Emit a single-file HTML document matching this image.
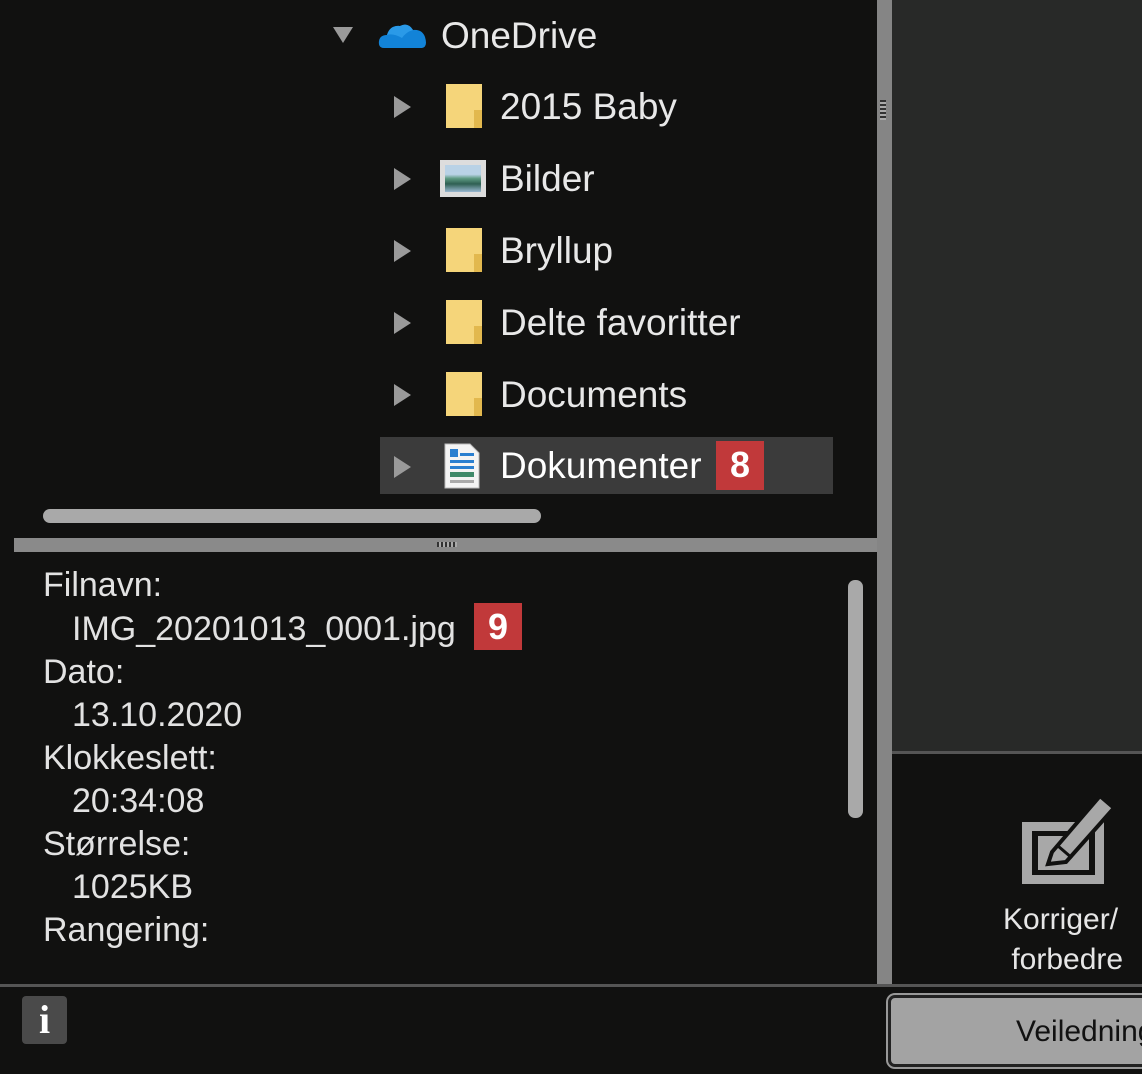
<!DOCTYPE html>
<html><head><meta charset="utf-8"><style>
*{margin:0;padding:0;box-sizing:border-box}
body{width:1142px;height:1074px;background:#111110;position:relative;overflow:hidden;font-family:"Liberation Sans",Arimo,Arial,Helvetica,sans-serif;color:#e4e4e4}
.a{position:absolute}
.t{position:absolute;font-size:37px;line-height:44px;white-space:nowrap;color:#e8e8e8}
.tri{position:absolute;width:0;height:0;border-top:11px solid transparent;border-bottom:11px solid transparent;border-left:17px solid #9a9a9a}
.fold{position:absolute;width:36px;height:44px;background:#f5d57a}
.fold:after{content:"";position:absolute;right:0;bottom:0;width:8px;height:18px;background:#e2b84e}
.i{position:absolute;font-size:34px;line-height:43px;white-space:nowrap;color:#e2e2e2}
.badge{position:absolute;background:#c1393a;color:#fff;font-weight:bold;font-size:36px;text-align:center;line-height:48px}
</style></head><body>
<div class="a" style="left:892px;top:0;width:250px;height:751px;background:#282928"></div>
<div class="a" style="left:892px;top:751px;width:250px;height:3px;background:#555"></div>
<div class="a" style="left:877px;top:0;width:15px;height:984px;background:#858585"></div>
<div class="a" style="left:880px;top:100px;width:6px;height:20px;background:repeating-linear-gradient(#333 0 2px,#aaa 2px 4px)"></div>
<div class="a" style="left:14px;top:538px;width:863px;height:14px;background:#8a8a8a"></div>
<div class="a" style="left:437px;top:542px;width:20px;height:5px;background:repeating-linear-gradient(90deg,#333 0 2px,#aaa 2px 4px)"></div>
<div class="a" style="left:43px;top:509px;width:498px;height:14px;border-radius:7px;background:#a9a9a9"></div>
<div class="a" style="left:848px;top:580px;width:15px;height:238px;border-radius:7px;background:#a9a9a9"></div>
<div class="a" style="left:0;top:984px;width:1142px;height:3px;background:#555"></div>

<div class="a" style="left:333px;top:27px;width:0;height:0;border-left:10px solid transparent;border-right:10px solid transparent;border-top:16px solid #9a9a9a"></div>
<svg class="a" style="left:378px;top:20px" width="50" height="30" viewBox="0 0 50 30"><path d="M6 28 Q0 28 1 21 Q2 15 9 15 Q12 5 22 6 Q30 2 35 10 Q44 9 47 17 Q50 27 44 28 Z" fill="#1283d8"/><path d="M9 15 Q12 5 22 6 Q30 2 35 10 Q28 12 24 18 Q15 13 9 15Z" fill="#2a9ae8"/></svg>
<div class="t" style="left:441px;top:14px">OneDrive</div>

<div class="a" style="left:380px;top:437px;width:453px;height:57px;background:#3b3b3b"></div>

<div class="tri" style="left:394px;top:96px"></div><div class="fold" style="left:446px;top:84px"></div><div class="t" style="left:500px;top:85px">2015 Baby</div>
<div class="tri" style="left:394px;top:168px"></div>
<div class="a" style="left:440px;top:160px;width:46px;height:37px;background:#ddd;padding:5px"><div style="width:100%;height:100%;background:linear-gradient(#b9d2e6 0 35%,#5d9a82 50%,#2f5f52 70%,#9ab9d2 100%)"></div></div>
<div class="t" style="left:500px;top:157px">Bilder</div>
<div class="tri" style="left:394px;top:240px"></div><div class="fold" style="left:446px;top:228px"></div><div class="t" style="left:500px;top:229px">Bryllup</div>
<div class="tri" style="left:394px;top:312px"></div><div class="fold" style="left:446px;top:300px"></div><div class="t" style="left:500px;top:301px">Delte favoritter</div>
<div class="tri" style="left:394px;top:384px"></div><div class="fold" style="left:446px;top:372px"></div><div class="t" style="left:500px;top:373px">Documents</div>
<div class="tri" style="left:394px;top:456px"></div>
<svg class="a" style="left:444px;top:443px" width="36" height="46" viewBox="0 0 36 46"><path d="M1 1H26L35 10V45H1Z" fill="#f4f4f4" stroke="#bbb"/><rect x="6" y="6" width="8" height="8" fill="#2a7fd0"/><rect x="16" y="10" width="14" height="3" fill="#2a7fd0"/><rect x="6" y="17" width="24" height="3" fill="#2a7fd0"/><rect x="6" y="23" width="24" height="3" fill="#2a7fd0"/><rect x="6" y="29" width="24" height="5" fill="#3f8a6a"/><rect x="6" y="37" width="24" height="3" fill="#aaa"/></svg>
<div class="t" style="left:500px;top:444px;color:#fff">Dokumenter</div>
<div class="badge" style="left:716px;top:441px;width:48px;height:49px">8</div>

<div class="i" style="left:43px;top:564px">Filnavn:</div>
<div class="i" style="left:72px;top:608px">IMG_20201013_0001.jpg</div>
<div class="badge" style="left:474px;top:603px;width:48px;height:47px;line-height:47px">9</div>
<div class="i" style="left:43px;top:651px">Dato:</div>
<div class="i" style="left:72px;top:694px">13.10.2020</div>
<div class="i" style="left:43px;top:737px">Klokkeslett:</div>
<div class="i" style="left:72px;top:780px">20:34:08</div>
<div class="i" style="left:43px;top:823px">Størrelse:</div>
<div class="i" style="left:72px;top:866px">1025KB</div>
<div class="i" style="left:43px;top:909px">Rangering:</div>

<div class="a" style="left:22px;top:996px;width:45px;height:48px;background:#4a4a4a;border-radius:4px;color:#fff;font-family:'Liberation Serif',serif;font-size:40px;font-weight:bold;text-align:center;line-height:48px">i</div>

<svg class="a" style="left:1018px;top:782px" width="106" height="106" viewBox="0 0 106 106"><rect x="4" y="40" width="82" height="62" fill="#a8a8a8"/><rect x="14" y="49" width="63" height="44" fill="#111110"/><rect x="20" y="54" width="51" height="34" fill="#a8a8a8"/><path d="M34 70 L82 14 L96 26 L48 80 L30 82 Z" fill="#a8a8a8" stroke="#111110" stroke-width="4"/><path d="M40 64 L54 76" stroke="#111110" stroke-width="3"/></svg>
<div class="a" style="left:1003px;top:900px;font-size:30px;line-height:40px;color:#e6e6e6;white-space:nowrap">Korriger/<br>&nbsp;forbedre</div>

<div class="a" style="left:888px;top:995px;width:270px;height:72px;border-radius:7px;background:#a3a3a3;border:3px solid #222;outline:2px solid #999"></div>
<div class="a" style="left:1016px;top:1012px;font-size:30px;line-height:40px;color:#111;white-space:nowrap">Veiledning</div>
</body></html>
